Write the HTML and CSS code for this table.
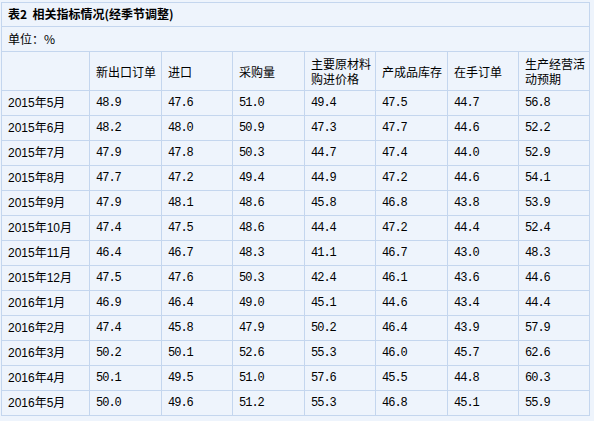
FILE: index.html
```html
<!DOCTYPE html>
<html lang="zh">
<head>
<meta charset="utf-8">
<link rel="stylesheet" href="styles.css">
</head>
<body>
<table class="stats">
  <colgroup>
    <col class="c-date"><col class="c-a"><col class="c-b"><col class="c-a"><col class="c-b"><col class="c-a"><col class="c-b"><col class="c-b">
  </colgroup>
  <tr class="title-row"><td colspan="8">表2&nbsp;&nbsp;相关指标情况(经季节调整)</td></tr>
  <tr class="unit-row"><td colspan="8">单位：%</td></tr>
  <tr class="head-row">
    <td></td><td>新出口订单</td><td>进口</td><td>采购量</td><td>主要原材料购进价格</td><td>产成品库存</td><td>在手订单</td><td>生产经营活动预期</td>
  </tr>
  <tr><td class="date">2015年5月</td><td>48.9</td><td>47.6</td><td>51.0</td><td>49.4</td><td>47.5</td><td>44.7</td><td>56.8</td></tr>
  <tr><td class="date">2015年6月</td><td>48.2</td><td>48.0</td><td>50.9</td><td>47.3</td><td>47.7</td><td>44.6</td><td>52.2</td></tr>
  <tr><td class="date">2015年7月</td><td>47.9</td><td>47.8</td><td>50.3</td><td>44.7</td><td>47.4</td><td>44.0</td><td>52.9</td></tr>
  <tr><td class="date">2015年8月</td><td>47.7</td><td>47.2</td><td>49.4</td><td>44.9</td><td>47.2</td><td>44.6</td><td>54.1</td></tr>
  <tr><td class="date">2015年9月</td><td>47.9</td><td>48.1</td><td>48.6</td><td>45.8</td><td>46.8</td><td>43.8</td><td>53.9</td></tr>
  <tr><td class="date">2015年10月</td><td>47.4</td><td>47.5</td><td>48.6</td><td>44.4</td><td>47.2</td><td>44.4</td><td>52.4</td></tr>
  <tr><td class="date">2015年11月</td><td>46.4</td><td>46.7</td><td>48.3</td><td>41.1</td><td>46.7</td><td>43.0</td><td>48.3</td></tr>
  <tr><td class="date">2015年12月</td><td>47.5</td><td>47.6</td><td>50.3</td><td>42.4</td><td>46.1</td><td>43.6</td><td>44.6</td></tr>
  <tr><td class="date">2016年1月</td><td>46.9</td><td>46.4</td><td>49.0</td><td>45.1</td><td>44.6</td><td>43.4</td><td>44.4</td></tr>
  <tr><td class="date">2016年2月</td><td>47.4</td><td>45.8</td><td>47.9</td><td>50.2</td><td>46.4</td><td>43.9</td><td>57.9</td></tr>
  <tr><td class="date">2016年3月</td><td>50.2</td><td>50.1</td><td>52.6</td><td>55.3</td><td>46.0</td><td>45.7</td><td>62.6</td></tr>
  <tr><td class="date">2016年4月</td><td>50.1</td><td>49.5</td><td>51.0</td><td>57.6</td><td>45.5</td><td>44.8</td><td>60.3</td></tr>
  <tr><td class="date">2016年5月</td><td>50.0</td><td>49.6</td><td>51.2</td><td>55.3</td><td>46.8</td><td>45.1</td><td>55.9</td></tr>
</table>
</body>
</html>
```
FILE: styles.css
```css
html, body {
  margin: 0;
  background: #eef4fc;
}
body {
  padding: 2px 0 0 1px;
  color: #000;
  font-family: "Liberation Mono", "Noto Sans CJK SC", monospace;
  font-size: 12px;
}
.stats {
  border-collapse: collapse;
  table-layout: fixed;
  width: 589px;
}
.c-date { width: 88px; }
.c-a { width: 72px; }
.c-b { width: 71px; }
.stats td {
  border: 1px solid #c4d6ee;
  padding: 4px 1px 4px 6px;
  line-height: 16px;
  height: 16px;
  letter-spacing: -1px;
  vertical-align: middle;
  overflow: hidden;
}
.title-row td {
  font-family: "Noto Sans CJK SC", sans-serif;
  font-weight: bold;
  letter-spacing: 0;
  padding-top: 3px;
  padding-bottom: 4px;
}
.unit-row td {
  font-family: "Noto Sans CJK SC", sans-serif;
  letter-spacing: 0;
}
.head-row td {
  font-family: "Noto Sans CJK SC", sans-serif;
  letter-spacing: 0;
  line-height: 15px;
  height: 30px;
}
.stats td.date {
  font-family: "Liberation Sans", "Noto Sans CJK SC", sans-serif;
  letter-spacing: 0;
}
```
